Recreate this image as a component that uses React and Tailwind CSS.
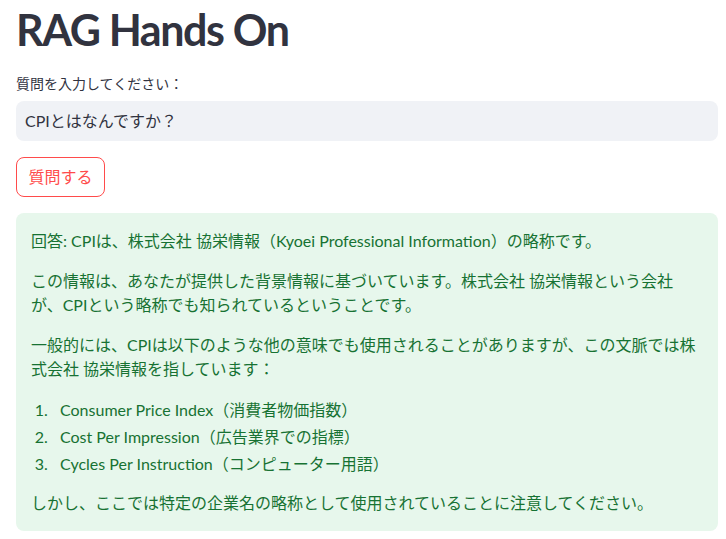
export default function App() {
  const font = { fontFamily: '"Lato", "Noto Sans CJK JP", sans-serif' };
  return (
    <div className="min-h-[539px] bg-white pl-4 pr-2 text-[#31333f]" style={font}>
      <h1 className="pt-[2px] text-[43px] font-bold leading-[56px] tracking-[-1.4px] text-[#31333f]">RAG Hands On</h1>
      <div className="mt-[16px] text-[14px] leading-[20px]">質問を入力してください：</div>
      <div className="mt-[7px] flex h-[40px] items-center rounded-lg bg-[#f0f2f6] px-[9px] text-[16px]">CPIとはなんですか？</div>
      <button className="mt-[16px] flex h-[40px] w-[89px] items-center justify-center rounded-lg border border-[#ff4b4b] bg-white text-[16px] text-[#ff4b4b]">質問する</button>
      <div className="mt-[16px] rounded-lg bg-[#e7f7ec] px-[15px] pb-[16px] pt-[16px] text-[16px] leading-[24px] text-[#177233]">
        <p>回答: CPIは、株式会社 協栄情報（Kyoei Professional Information）の略称です。</p>
        <p className="mt-4">この情報は、あなたが提供した背景情報に基づいています。株式会社 協栄情報という会社が、CPIという略称でも知られているということです。</p>
        <p className="mt-4">一般的には、CPIは以下のような他の意味でも使用されることがありますが、この文脈では株式会社 協栄情報を指しています：</p>
        <ol className="mt-[15px] list-decimal pl-[21px]">
          <li className="pl-[8px] leading-[27px]">Consumer Price Index（消費者物価指数）</li>
          <li className="pl-[8px] leading-[27px]">Cost Per Impression（広告業界での指標）</li>
          <li className="pl-[8px] leading-[27px]">Cycles Per Instruction（コンピューター用語）</li>
        </ol>
        <p className="mt-[14px]">しかし、ここでは特定の企業名の略称として使用されていることに注意してください。</p>
      </div>
    </div>
  );
}
